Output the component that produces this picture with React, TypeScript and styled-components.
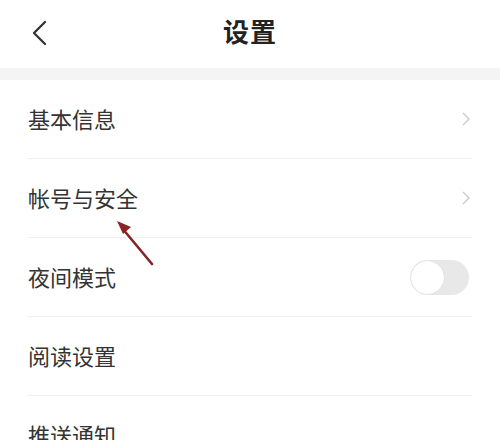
import React, { useState } from "react";
import styled, { createGlobalStyle } from "styled-components";

const GlobalStyle = createGlobalStyle`
  html, body {
    margin: 0;
    padding: 0;
    background: #fff;
    font-family: "Noto Sans CJK SC", "Noto Sans", sans-serif;
  }
`;

const rows = [
  { label: "基本信息", kind: "link" },
  { label: "帐号与安全", kind: "link" },
  { label: "夜间模式", kind: "toggle" },
  { label: "阅读设置", kind: "none" },
  { label: "推送通知", kind: "none" },
];

const App = () => {
  const [night, setNight] = useState(false);

  return (
    <Page>
      <GlobalStyle />
      <Header>
        <BackButton aria-label="返回">
          <svg width="16" height="26" viewBox="0 0 16 26">
            <path d="M14 2 L3 13 L14 24" fill="none" stroke="#333" strokeWidth="2.3" strokeLinecap="round" strokeLinejoin="round" />
          </svg>
        </BackButton>
        <Title>设置</Title>
      </Header>
      <Band />
      <List>
        {rows.map(row => (
          <Row key={row.label}>
            <Label>{row.label}</Label>
            {row.kind === "link" && (
              <Chevron viewBox="0 0 8 14">
                <path d="M1 1 L7 7 L1 13" fill="none" stroke="#c8c8c8" strokeWidth="1.3" />
              </Chevron>
            )}
            {row.kind === "toggle" && (
              <Toggle on={night} onClick={() => setNight(!night)}>
                <Knob on={night} />
              </Toggle>
            )}
          </Row>
        ))}
      </List>
      {/* annotation arrow drawn over the screenshot */}
      <Arrow width="60" height="60" viewBox="0 0 60 60">
        <path d="M41 51 L11 15" stroke="#8a2424" strokeWidth="2.6" strokeLinecap="round" />
        <path d="M6 8 L20 14 L12 21 Z" fill="#8a2424" />
      </Arrow>
    </Page>
  );
};

const Page = styled.div`
  position: relative;
  width: 500px;
  height: 440px;
  overflow: hidden;
  background: #fff;
`;

const Header = styled.div`
  position: relative;
  height: 68px;
  display: flex;
  align-items: center;
  justify-content: center;
`;

const BackButton = styled.button`
  position: absolute;
  left: 31px;
  top: 20px;
  border: none;
  background: transparent;
  padding: 0;
  cursor: pointer;
`;

const Title = styled.h1`
  margin: 0;
  font-size: 26px;
  font-weight: 700;
  color: #222;
  letter-spacing: 1px;
  transform: translateY(-4px);
`;

const Band = styled.div`
  height: 12px;
  background: #f4f4f4;
`;

const List = styled.div`
  display: flex;
  flex-direction: column;
  padding: 0 28px;
`;

const Row = styled.div`
  height: 78px;
  display: flex;
  align-items: center;
  justify-content: space-between;
  border-bottom: 1px solid #f0f0f0;
`;

const Label = styled.span`
  font-size: 22px;
  color: #333;
  transform: translateY(-1px);
`;

const Chevron = styled.svg`
  width: 8px;
  height: 14px;
  margin-right: 2px;
`;

const Toggle = styled.div<{ on: boolean }>`
  position: relative;
  width: 59px;
  height: 35px;
  border-radius: 18px;
  background: ${props => (props.on ? "#e6453c" : "#e8e8e8")};
  margin-right: 3px;
  cursor: pointer;
`;

const Knob = styled.div<{ on: boolean }>`
  position: absolute;
  top: 1px;
  left: ${props => (props.on ? "25px" : "1px")};
  width: 33px;
  height: 33px;
  border-radius: 50%;
  background: #fff;
  box-shadow: 0 0 1px rgba(0, 0, 0, 0.15);
`;

const Arrow = styled.svg`
  position: absolute;
  left: 111px;
  top: 213px;
`;

export default App;
